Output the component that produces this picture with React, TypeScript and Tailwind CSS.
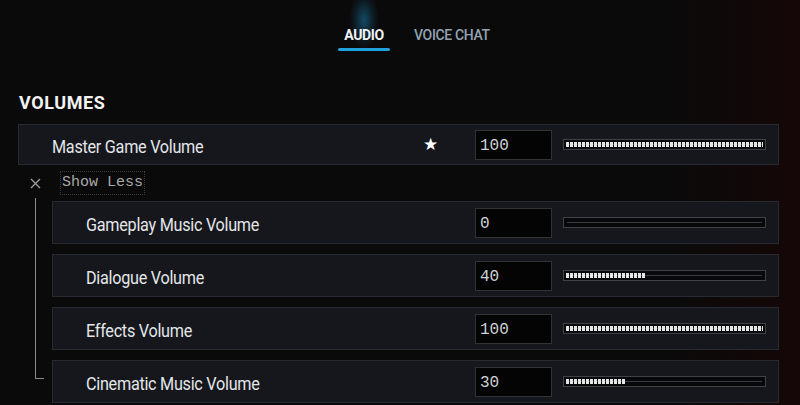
import React from 'react';

type Vol = { label: string; value: number };

const subVolumes: Vol[] = [
  { label: 'Gameplay Music Volume', value: 0 },
  { label: 'Dialogue Volume', value: 40 },
  { label: 'Effects Volume', value: 100 },
  { label: 'Cinematic Music Volume', value: 30 },
];

function Slider({ value }: { value: number }) {
  return (
    <div className="relative w-[203px] h-[11px] border border-[#404247] bg-[#07080a] p-[2px]">
      {/* empty track line */}
      <div className="absolute left-[3px] right-[3px] top-[4px] h-[1px] bg-[#3a3c40]" />
      <div
        className="relative h-full bg-[repeating-linear-gradient(90deg,#e6e6e6_0px,#e6e6e6_3px,transparent_3px,transparent_4px)]"
        style={{ width: `${value}%` }}
      />
    </div>
  );
}

function ValueBox({ value }: { value: number }) {
  return (
    <div className="w-[77px] h-[30px] bg-[#040404] border border-[#303236] flex items-center pl-[4px] pt-[2px] text-[16px] text-[#cfd2d4] font-['Liberation_Mono',monospace]">
      {value}
    </div>
  );
}

function Label({ text }: { text: string }) {
  return (
    <div className="flex-1 pt-[3px]">
      <span className="inline-block origin-left scale-x-[0.9] whitespace-nowrap text-[18px] text-[#e4e6e8] tracking-[-0.3px]">
        {text}
      </span>
    </div>
  );
}

export default function App() {
  return (
    <div className="w-[800px] h-[405px] overflow-hidden relative bg-[linear-gradient(90deg,#0b0a0a_0%,#0b0a0a_85%,#150707_100%)] font-['Roboto',sans-serif]">
      {/* tab glow */}
      <div className="absolute left-[349px] top-[-10px] w-[30px] h-[60px] bg-[radial-gradient(ellipse_at_center,rgba(30,150,210,0.45)_0%,rgba(30,150,210,0.12)_45%,transparent_70%)]" />

      {/* Tabs */}
      <div className="relative flex items-start pl-[338px] pt-[26px] gap-[24px]">
        <div className="flex flex-col items-center w-[52px]">
          <span className="text-[14px] font-bold text-[#eef3f6] tracking-tight leading-[18px]">AUDIO</span>
          <div className="mt-[4px] w-[52px] h-[3px] rounded-full bg-[#1ea3dc]" />
        </div>
        <span className="text-[14px] font-medium text-[#93a3b4] tracking-tight leading-[18px]">VOICE CHAT</span>
      </div>

      {/* Volumes */}
      <div className="pl-[18px] pr-[21px] pt-[42px]">
        <h2 className="pl-[1px] text-[18px] font-bold text-[#f2f2f2] leading-[20px] tracking-[0.6px]">VOLUMES</h2>

        <div className="mt-[11px] h-[41px] flex items-center bg-[#15171d] border border-[#272a30] pl-[33px] pr-[12px]">
          <Label text="Master Game Volume" />
          <span className="text-[17px] text-white mr-[37px]">★</span>
          <ValueBox value={100} />
          <div className="ml-[11px]">
            <Slider value={100} />
          </div>
        </div>

        <div className="flex items-center h-[24px] mt-[6px] pl-[12px]">
          <svg width="11" height="11" viewBox="0 0 11 11" className="mr-[20px]">
            <path d="M1 1 L10 10 M10 1 L1 10" stroke="#9a9a9a" strokeWidth="1.4" />
          </svg>
          <span className="text-[15px] text-[#a8a8a8] font-['Liberation_Mono',monospace] outline-1 outline-dotted outline-[#3c3c3c] px-[1px]">
            Show Less
          </span>
        </div>

        <div className="relative pl-[34px] mt-[6px] flex flex-col gap-[10px]">
          <div className="absolute left-[17px] top-[-3px] h-[181px] w-[1px] bg-[#8a8a8a]" />
          <div className="absolute left-[17px] top-[177px] w-[9px] h-[1px] bg-[#8a8a8a]" />
          {subVolumes.map((v) => (
            <div key={v.label} className="h-[43px] flex items-center bg-[#15171d] border border-[#272a30] pl-[33px] pr-[12px]">
              <Label text={v.label} />
              <ValueBox value={v.value} />
              <div className="ml-[11px]">
                <Slider value={v.value} />
              </div>
            </div>
          ))}
        </div>
      </div>
    </div>
  );
}
